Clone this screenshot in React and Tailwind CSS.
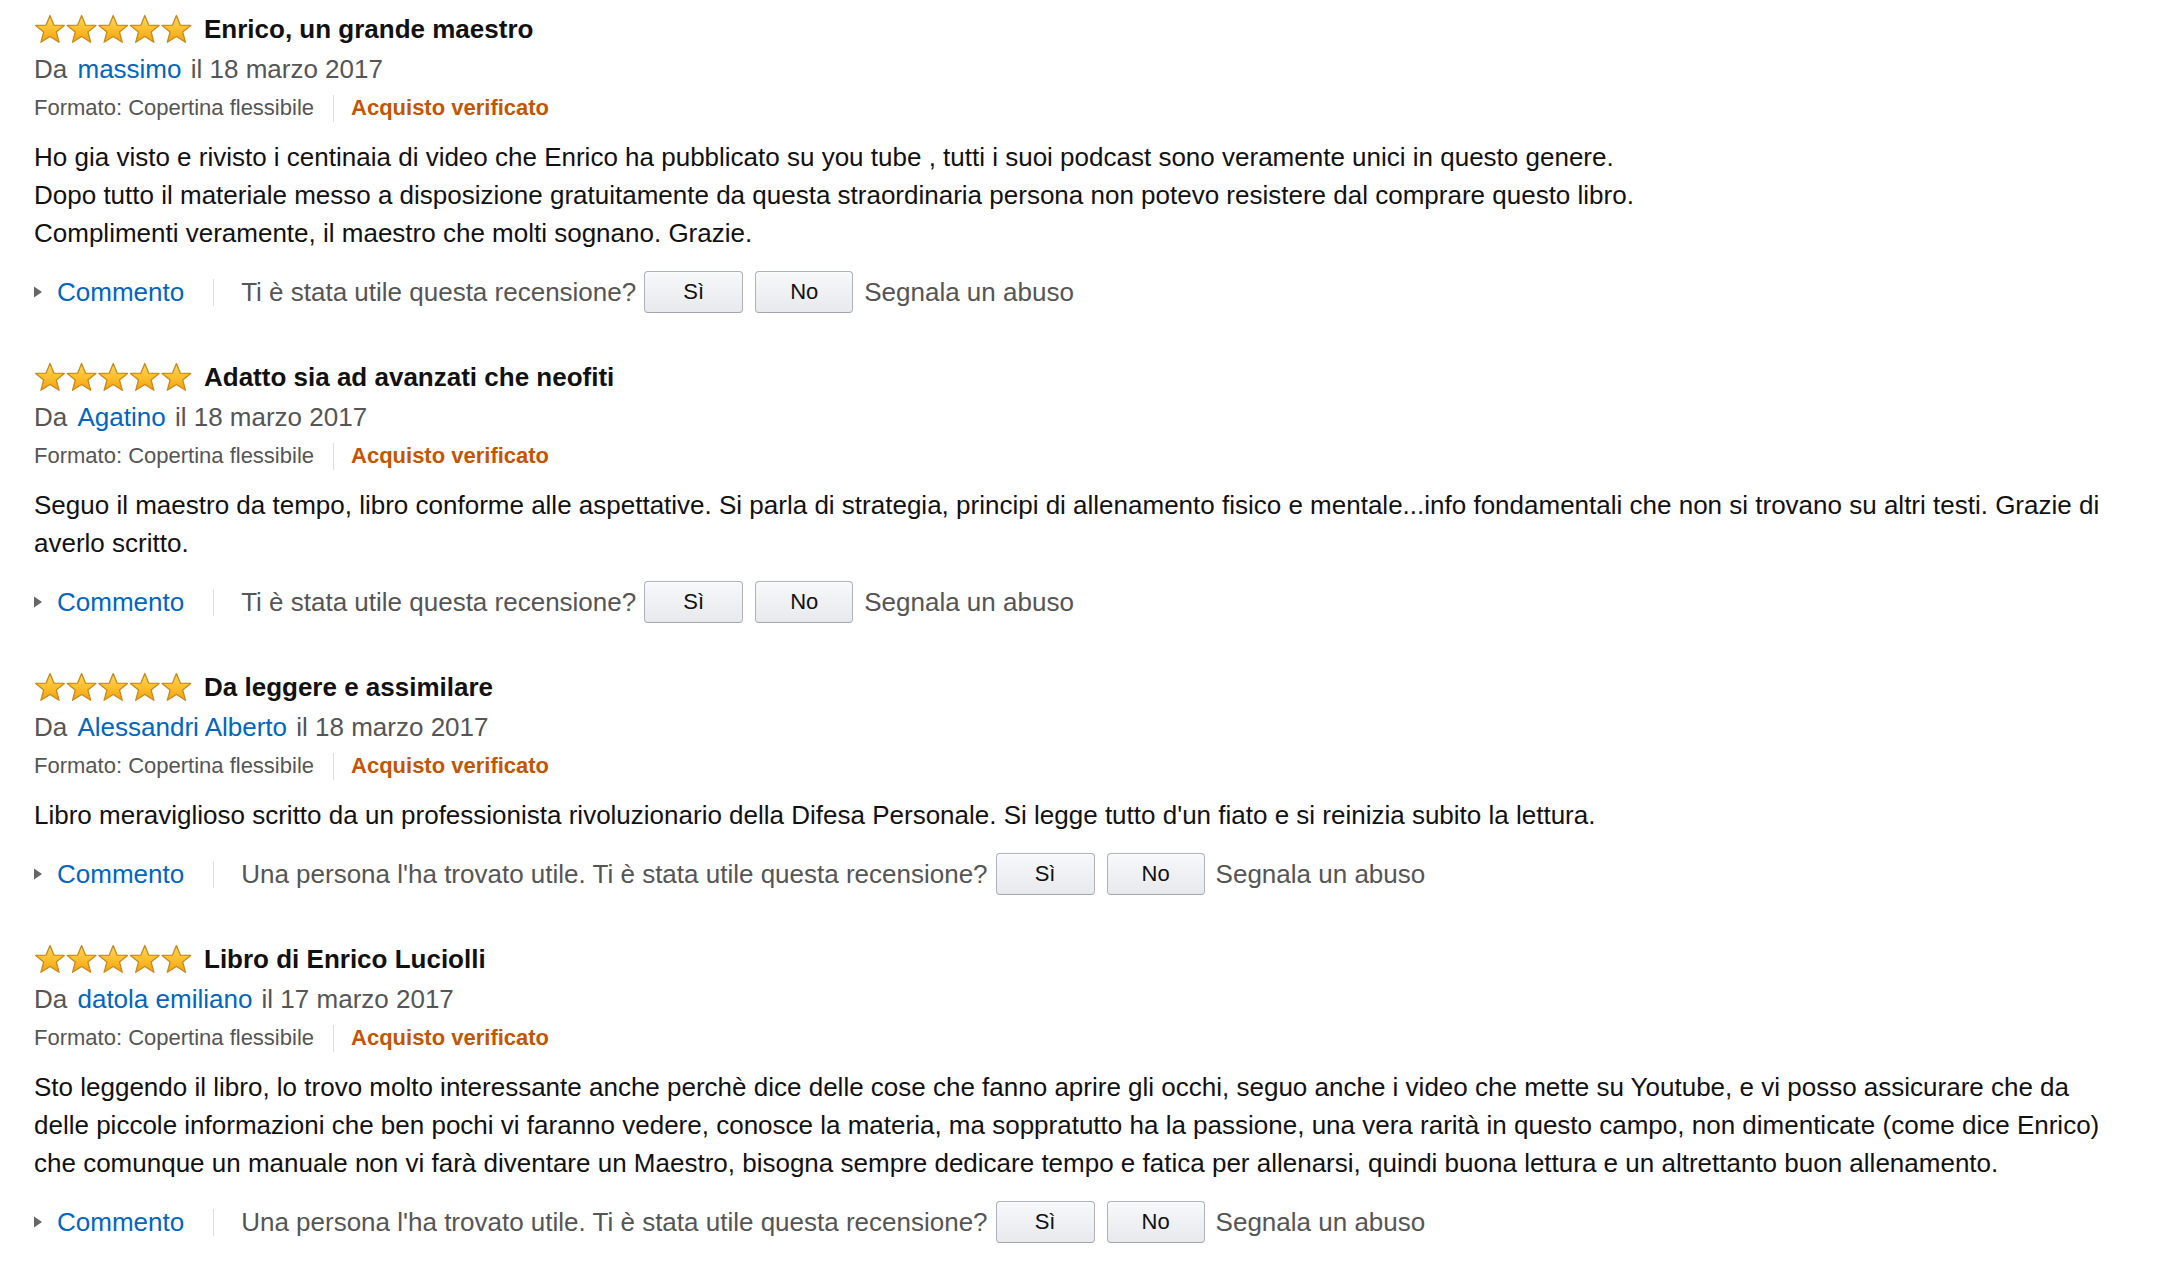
import React from "react";

const reviews = [
  {
    title: "Enrico, un grande maestro",
    author: "massimo",
    date: "il 18 marzo 2017",
    body: [
      "Ho gia visto e rivisto i centinaia di video che Enrico ha pubblicato su you tube , tutti i suoi podcast sono veramente unici in questo genere.",
      "Dopo tutto il materiale messo a disposizione gratuitamente da questa straordinaria persona non potevo resistere dal comprare questo libro.",
      "Complimenti veramente, il maestro che molti sognano. Grazie.",
    ],
    helpful: null,
  },
  {
    title: "Adatto sia ad avanzati che neofiti",
    author: "Agatino",
    date: "il 18 marzo 2017",
    body: [
      "Seguo il maestro da tempo, libro conforme alle aspettative. Si parla di strategia, principi di allenamento fisico e mentale...info fondamentali che non si trovano su altri testi. Grazie di averlo scritto.",
    ],
    helpful: null,
  },
  {
    title: "Da leggere e assimilare",
    author: "Alessandri Alberto",
    date: "il 18 marzo 2017",
    body: [
      "Libro meraviglioso scritto da un professionista rivoluzionario della Difesa Personale. Si legge tutto d'un fiato e si reinizia subito la lettura.",
    ],
    helpful: "Una persona l'ha trovato utile.",
  },
  {
    title: "Libro di Enrico Luciolli",
    author: "datola emiliano",
    date: "il 17 marzo 2017",
    body: [
      "Sto leggendo il libro, lo trovo molto interessante anche perchè dice delle cose che fanno aprire gli occhi, seguo anche i video che mette su Youtube, e vi posso assicurare che da delle piccole informazioni che ben pochi vi faranno vedere, conosce la materia, ma soppratutto ha la passione, una vera rarità in questo campo, non dimenticate (come dice Enrico) che comunque un manuale non vi farà diventare un Maestro, bisogna sempre dedicare tempo e fatica per allenarsi, quindi buona lettura e un altrettanto buon allenamento.",
    ],
    helpful: "Una persona l'ha trovato utile.",
  },
];

const STAR =
  "16,1 19.9,10.6 30.3,10.9 22.3,17.5 25.1,27.8 16,22 6.9,27.8 9.7,17.5 1.7,10.9 12.1,10.6";

function Stars({ id }) {
  return (
    <svg width="158" height="30" viewBox="0 0 158 30" className="shrink-0">
      <defs>
        <linearGradient id={`sg${id}`} x1="0" y1="0" x2="0" y2="1">
          <stop offset="0" stopColor="#ffd75a" />
          <stop offset="0.55" stopColor="#fbbd2a" />
          <stop offset="1" stopColor="#f49f12" />
        </linearGradient>
      </defs>
      {[0, 1, 2, 3, 4].map((i) => (
        <polygon
          key={i}
          points={STAR}
          transform={`translate(${i * 31.6} 0.5)`}
          fill={`url(#sg${id})`}
          stroke="#c88a1a"
          strokeWidth="1.3"
          strokeLinejoin="round"
        />
      ))}
    </svg>
  );
}

function Review({ r, idx }) {
  return (
    <div className={idx === 0 ? "" : "mt-[43px]"}>
      <div className="flex items-center h-[42px]">
        <Stars id={idx} />
        <span className="ml-[12px] text-[26px] font-bold text-[#111] leading-[38px]">
          {r.title}
        </span>
      </div>
      <div className="h-[38px] text-[26px] leading-[38px] text-[#555]">
        Da <a className="ml-[3px] text-[#0066c0]">{r.author}</a> <span className="ml-[2px]">{r.date}</span>
      </div>
      <div className="mt-[4px] flex items-center h-[32px] text-[22px] leading-[32px]">
        <span className="text-[#555]">Formato: Copertina flessibile</span>
        <span className="ml-[19px] mr-[17px] w-px h-[27px] bg-[#ddd]" />
        <span className="font-bold text-[#c45500]">Acquisto verificato</span>
      </div>
      <div className="mt-[14px] text-[26px] leading-[38px] text-[#111]">
        {r.body.map((line, i) => (
          <div key={i}>{line}</div>
        ))}
      </div>
      <div className="mt-[19px] flex items-center h-[42px] text-[26px] leading-[38px]">
        <svg width="8" height="12" viewBox="0 0 8 12" className="shrink-0">
          <polygon points="0,0.5 8,6 0,11.5" fill="#666" />
        </svg>
        <a className="ml-[15px] text-[#0066c0]">Commento</a>
        <span className="ml-[29px] w-px h-[27px] bg-[#ddd]" />
        <span className="ml-[27px] text-[#555]">
          {r.helpful ? r.helpful + " " : ""}Ti è stata utile questa recensione?
        </span>
        <button className="ml-[8px] w-[99px] h-[42px] rounded-[4px] border border-[#adb1b8] border-b-[#a2a6ac] bg-linear-to-b from-[#f7f8fa] to-[#e7e9ec] text-[22px] text-[#111] shadow-[inset_0_1px_0_rgba(255,255,255,0.6)]">
          Sì
        </button>
        <button className="ml-[12px] w-[98px] h-[42px] rounded-[4px] border border-[#adb1b8] border-b-[#a2a6ac] bg-linear-to-b from-[#f7f8fa] to-[#e7e9ec] text-[22px] text-[#111] shadow-[inset_0_1px_0_rgba(255,255,255,0.6)]">
          No
        </button>
        <span className="ml-[11px] text-[#555]">Segnala un abuso</span>
      </div>
    </div>
  );
}

export default function App() {
  return (
    <div className="min-h-[1274px] w-full bg-white font-['Liberation_Sans',Arial,Helvetica,sans-serif] pt-[8px] pl-[34px] pr-[50px]">
      {reviews.map((r, i) => (
        <Review key={i} r={r} idx={i} />
      ))}
    </div>
  );
}
